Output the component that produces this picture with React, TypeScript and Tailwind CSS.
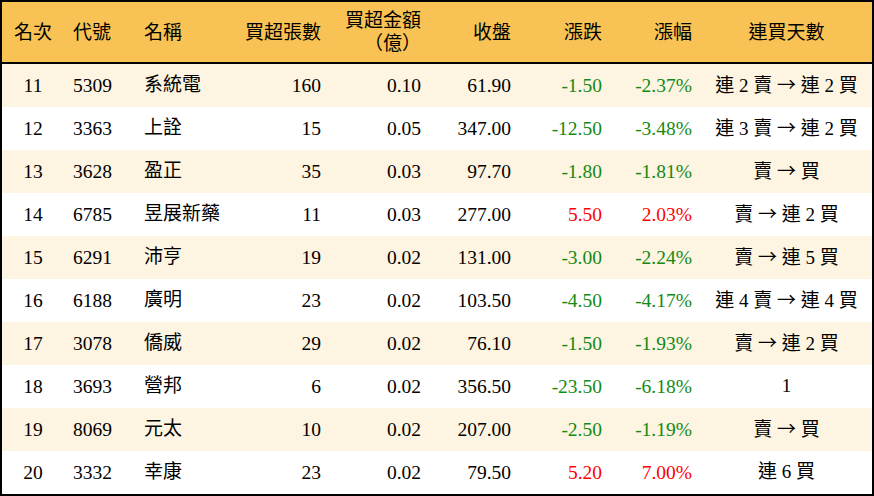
import React from 'react';

type Row = {
  rank: number;
  code: string;
  name: string;
  lots: string;
  amount: string;
  close: string;
  change: string;
  pct: string;
  streak: string;
};

const rows: Row[] = [
  { rank: 11, code: '5309', name: '系統電', lots: '160', amount: '0.10', close: '61.90', change: '-1.50', pct: '-2.37%', streak: '連 2 賣 → 連 2 買' },
  { rank: 12, code: '3363', name: '上詮', lots: '15', amount: '0.05', close: '347.00', change: '-12.50', pct: '-3.48%', streak: '連 3 賣 → 連 2 買' },
  { rank: 13, code: '3628', name: '盈正', lots: '35', amount: '0.03', close: '97.70', change: '-1.80', pct: '-1.81%', streak: '賣 → 買' },
  { rank: 14, code: '6785', name: '昱展新藥', lots: '11', amount: '0.03', close: '277.00', change: '5.50', pct: '2.03%', streak: '賣 → 連 2 買' },
  { rank: 15, code: '6291', name: '沛亨', lots: '19', amount: '0.02', close: '131.00', change: '-3.00', pct: '-2.24%', streak: '賣 → 連 5 買' },
  { rank: 16, code: '6188', name: '廣明', lots: '23', amount: '0.02', close: '103.50', change: '-4.50', pct: '-4.17%', streak: '連 4 賣 → 連 4 買' },
  { rank: 17, code: '3078', name: '僑威', lots: '29', amount: '0.02', close: '76.10', change: '-1.50', pct: '-1.93%', streak: '賣 → 連 2 買' },
  { rank: 18, code: '3693', name: '營邦', lots: '6', amount: '0.02', close: '356.50', change: '-23.50', pct: '-6.18%', streak: '1' },
  { rank: 19, code: '8069', name: '元太', lots: '10', amount: '0.02', close: '207.00', change: '-2.50', pct: '-1.19%', streak: '賣 → 買' },
  { rank: 20, code: '3332', name: '幸康', lots: '23', amount: '0.02', close: '79.50', change: '5.20', pct: '7.00%', streak: '連 6 買' },
];

const cols = 'grid grid-cols-[62px_71px_95px_100px_100px_90px_91px_90px_171px]';

// the arrow is drawn with the CJK font so it gets the full-width glyph
function Streak({ text }: { text: string }) {
  const parts = text.split('→');
  return (
    <>
      {parts.map((p, i) => (
        <React.Fragment key={i}>
          {i > 0 && <span style={{ fontFamily: '"Noto Sans CJK TC", sans-serif' }}>→</span>}
          {p}
        </React.Fragment>
      ))}
    </>
  );
}

export default function App() {
  return (
    <div
      className="w-[874px] h-[496px] bg-white border-2 border-black text-[19.5px] text-black overflow-hidden"
      style={{ fontFamily: '"Liberation Serif", "Noto Sans CJK TC", serif' }}
    >
      <div className={`${cols} h-[62px] bg-[#f8c254] border-b-2 border-black items-center leading-[23px] text-[19px]`}>
        <div className="text-center">名次</div>
        <div className="pl-[9px]">代號</div>
        <div className="pl-[9px]">名稱</div>
        <div className="text-right pr-[9px]">買超張數</div>
        <div className="text-right pr-[9px]">
          <div>買超金額</div>
          <div>（億）</div>
        </div>
        <div className="text-right pr-[9px]">收盤</div>
        <div className="text-right pr-[9px]">漲跌</div>
        <div className="text-right pr-[9px]">漲幅</div>
        <div className="text-center">連買天數</div>
      </div>
      {rows.map((r, i) => {
        const up = !r.change.startsWith('-');
        const color = up ? 'text-[#ff0000]' : 'text-[#138a13]';
        return (
          <div
            key={r.rank}
            className={`${cols} h-[43px] items-center ${i % 2 === 0 ? 'bg-[#fdf4e1]' : 'bg-white'}`}
          >
            <div className="text-center">{r.rank}</div>
            <div className="pl-[9px]">{r.code}</div>
            <div className="pl-[9px] text-[19px]">{r.name}</div>
            <div className="text-right pr-[9px]">{r.lots}</div>
            <div className="text-right pr-[9px]">{r.amount}</div>
            <div className="text-right pr-[9px]">{r.close}</div>
            <div className={`text-right pr-[9px] ${color}`}>{r.change}</div>
            <div className={`text-right pr-[9px] ${color}`}>{r.pct}</div>
            <div className="text-center whitespace-nowrap text-[19px]">
              <Streak text={r.streak} />
            </div>
          </div>
        );
      })}
    </div>
  );
}
